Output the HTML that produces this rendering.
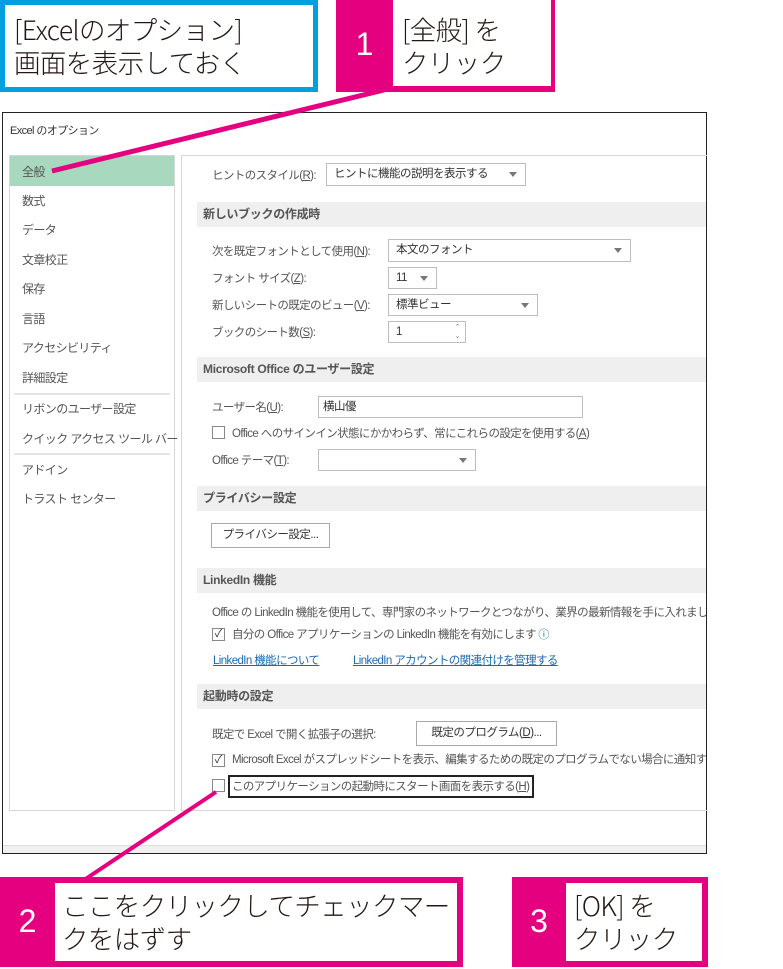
<!DOCTYPE html>
<html><head><meta charset="utf-8"><style>
*{margin:0;padding:0;box-sizing:border-box}
body{width:783px;height:969px;background:#fff;position:relative;overflow:hidden;font-family:"Liberation Sans","Noto Sans CJK JP",sans-serif;color:#444}
.a{position:absolute;white-space:nowrap}
.call{font-family:"Noto Sans CJK JP",sans-serif;font-size:26.5px;line-height:33px;color:#231815;font-weight:300;letter-spacing:-0.6px}
.num{color:#fff;font-size:32px;font-family:"Liberation Sans",sans-serif;text-align:center}
.t{font-size:11.5px;color:#555;letter-spacing:-0.6px}
.h{background:#efefef;font-weight:bold;font-size:12px;color:#555;padding-left:6px;line-height:25px;height:25px;letter-spacing:-0.3px}
.dd,.in{border:1px solid #bdbdbd;background:#fff;font-size:11.5px;color:#333;padding-left:7px;line-height:21px;letter-spacing:-0.5px}
.dd:after{content:"";position:absolute;right:8px;top:8px;border:4px solid transparent;border-top:5px solid #777}
.cb{width:13px;height:13px;border:1px solid #888;background:#fff;font-size:11px;line-height:11px;text-align:center;color:#333}
.nav{font-size:12px;color:#555;left:22px;letter-spacing:-0.6px}
.lk{color:#1a6ab0;text-decoration:underline;font-size:11.5px;letter-spacing:-0.6px}
</style></head><body>
<div class="a" style="left:0;top:0;width:318px;height:92px;border:5px solid #00a0e0"></div>
<div class="a call" style="left:14px;top:12px">[Excelのオプション]<br>画面を表示しておく</div>
<div class="a" style="left:336px;top:0;width:219px;height:92px;background:#e5007f"></div>
<div class="a" style="left:393px;top:0;width:158px;height:86px;background:#fff"></div>
<div class="a num" style="left:336px;top:26px;width:57px">1</div>
<div class="a call" style="left:402px;top:12px">[全般] を<br>クリック</div>
<div class="a" style="left:2px;top:112px;width:705px;height:742px;border:1px solid #222;background:#fff"></div>
<div class="a" style="left:3px;top:845px;width:703px;height:8px;background:#f0f0f0;border-top:1px solid #ddd"></div>
<div class="a t" style="left:10px;top:122px;font-size:11px;color:#333">Excel のオプション</div>
<div class="a" style="left:9px;top:155px;width:166px;height:656px;border:1px solid #d6d6d6"></div>
<div class="a" style="left:10px;top:156px;width:164px;height:30px;background:#a8d8be"></div>
<div class="a nav" style="top:163px">全般</div>
<div class="a nav" style="top:192px">数式</div>
<div class="a nav" style="top:221px">データ</div>
<div class="a nav" style="top:251px">文章校正</div>
<div class="a nav" style="top:280px">保存</div>
<div class="a nav" style="top:310px">言語</div>
<div class="a nav" style="top:339px">アクセシビリティ</div>
<div class="a nav" style="top:369px">詳細設定</div>
<div class="a" style="left:14px;top:393px;width:156px;height:2px;background:#e4e4e4"></div>
<div class="a nav" style="top:400px">リボンのユーザー設定</div>
<div class="a nav" style="top:430px">クイック アクセス ツール バー</div>
<div class="a" style="left:14px;top:453px;width:156px;height:2px;background:#e4e4e4"></div>
<div class="a nav" style="top:461px">アドイン</div>
<div class="a nav" style="top:490px">トラスト センター</div>
<div class="a" style="left:181px;top:155px;width:526px;height:656px;border:1px solid #d6d6d6;border-right:none"></div>

<div class="a t" style="left:212px;top:167px">ヒントのスタイル(<u>R</u>):</div>
<div class="a dd" style="left:326px;top:163px;width:200px;height:23px">ヒントに機能の説明を表示する</div>
<div class="a h" style="left:197px;top:202px;width:509px">新しいブックの作成時</div>
<div class="a t" style="left:212px;top:243px">次を既定フォントとして使用(<u>N</u>):</div>
<div class="a dd" style="left:388px;top:239px;width:243px;height:23px">本文のフォント</div>
<div class="a t" style="left:212px;top:270px">フォント サイズ(<u>Z</u>):</div>
<div class="a dd" style="left:388px;top:267px;width:49px;height:22px">11</div>
<div class="a t" style="left:212px;top:297px">新しいシートの既定のビュー(<u>V</u>):</div>
<div class="a dd" style="left:388px;top:294px;width:150px;height:22px">標準ビュー</div>
<div class="a t" style="left:212px;top:324px">ブックのシート数(<u>S</u>):</div>
<div class="a in" style="left:388px;top:321px;width:78px;height:22px">1<span style="position:absolute;right:5px;top:1px;font-size:7px;line-height:9px;color:#777">⌃<br>⌄</span></div>
<div class="a h" style="left:197px;top:357px;width:509px">Microsoft Office のユーザー設定</div>
<div class="a t" style="left:212px;top:399px">ユーザー名(<u>U</u>):</div>
<div class="a in" style="left:318px;top:396px;width:265px;height:22px;padding-left:4px">横山優</div>
<div class="a cb" style="left:212px;top:426px"></div>
<div class="a t" style="left:232px;top:425px">Office へのサインイン状態にかかわらず、常にこれらの設定を使用する(<u>A</u>)</div>
<div class="a t" style="left:212px;top:452px">Office テーマ(<u>T</u>):</div>
<div class="a dd" style="left:318px;top:449px;width:158px;height:22px"></div>
<div class="a h" style="left:197px;top:486px;width:509px">プライバシー設定</div>
<div class="a" style="left:211px;top:523px;width:119px;height:25px;border:1px solid #aaa;font-size:11.5px;color:#333;text-align:center;line-height:23px;letter-spacing:-0.5px">プライバシー設定...</div>
<div class="a h" style="left:197px;top:568px;width:509px">LinkedIn 機能</div>
<div class="a t" style="left:212px;top:604px;width:494px;overflow:hidden">Office の LinkedIn 機能を使用して、専門家のネットワークとつながり、業界の最新情報を手に入れましょう。</div>
<div class="a cb" style="left:212px;top:628px">✓</div>
<div class="a t" style="left:232px;top:626px">自分の Office アプリケーションの LinkedIn 機能を有効にします<span style="color:#1a6ab0;font-size:11px"> ⓘ</span></div>
<div class="a lk" style="left:213px;top:652px">LinkedIn 機能について</div>
<div class="a lk" style="left:353px;top:652px">LinkedIn アカウントの関連付けを管理する</div>
<div class="a h" style="left:197px;top:684px;width:509px">起動時の設定</div>
<div class="a t" style="left:212px;top:726px">既定で Excel で開く拡張子の選択:</div>
<div class="a" style="left:416px;top:721px;width:141px;height:25px;border:1px solid #aaa;font-size:11.5px;color:#333;text-align:center;line-height:23px;letter-spacing:-0.5px">既定のプログラム(<u>D</u>)...</div>
<div class="a cb" style="left:212px;top:754px">✓</div>
<div class="a t" style="left:232px;top:751px;width:474px;overflow:hidden">Microsoft Excel がスプレッドシートを表示、編集するための既定のプログラムでない場合に通知する</div>
<div class="a cb" style="left:212px;top:779px"></div>
<div class="a" style="left:228px;top:775px;width:306px;height:23px;border:2px solid #222"></div>
<div class="a t" style="left:232px;top:778px">このアプリケーションの起動時にスタート画面を表示する(<u>H</u>)</div>

<svg class="a" style="left:0;top:0" width="783" height="969"><line x1="392" y1="88" x2="52" y2="171" stroke="#e5007f" stroke-width="5"/><line x1="216" y1="792" x2="84" y2="880" stroke="#e5007f" stroke-width="4"/></svg>

<div class="a" style="left:0;top:877px;width:463px;height:90px;background:#e5007f"></div>
<div class="a" style="left:55px;top:883px;width:402px;height:78px;background:#fff"></div>
<div class="a num" style="left:0;top:903px;width:55px">2</div>
<div class="a call" style="left:62px;top:888px">ここをクリックしてチェックマー<br>クをはずす</div>
<div class="a" style="left:512px;top:877px;width:196px;height:90px;background:#e5007f"></div>
<div class="a" style="left:566px;top:883px;width:136px;height:78px;background:#fff"></div>
<div class="a num" style="left:512px;top:903px;width:54px">3</div>
<div class="a call" style="left:574px;top:888px">[OK] を<br>クリック</div>
</body></html>
